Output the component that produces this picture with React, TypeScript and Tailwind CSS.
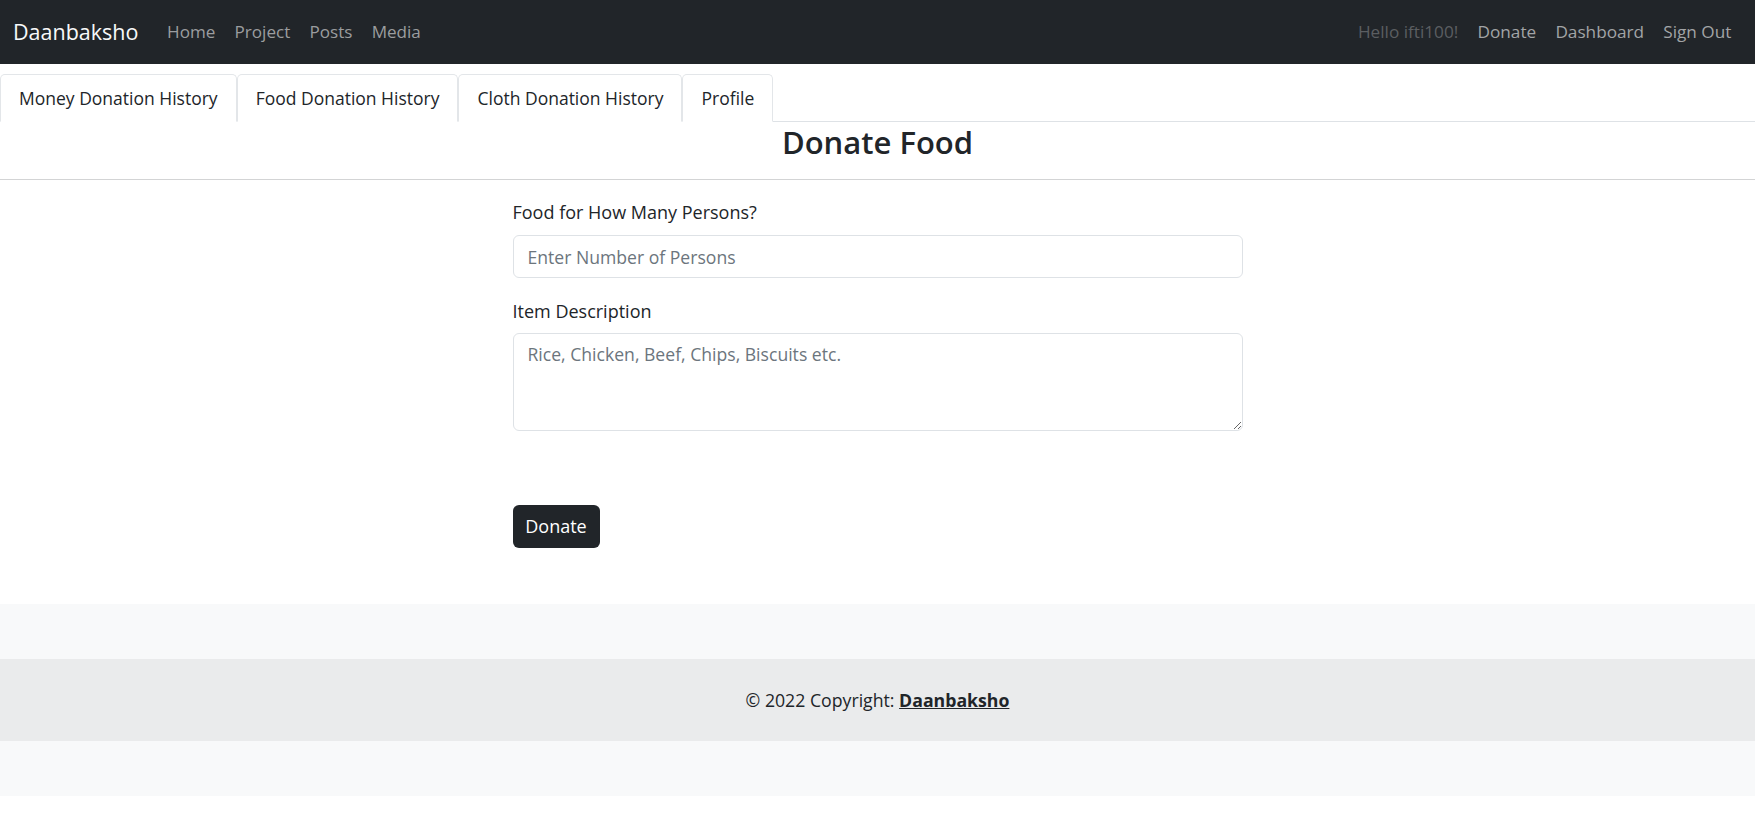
import React from "react";

const leftLinks = ["Home", "Project", "Posts", "Media"];
const rightLinks = ["Donate", "Dashboard", "Sign Out"];
const tabs = [
  "Money Donation History",
  "Food Donation History",
  "Cloth Donation History",
  "Profile",
];

function Navbar() {
  return (
    <nav className="flex h-[64px] items-center justify-between bg-[#212529] pl-[13px] pr-[14px]">
      <div className="flex items-center">
        <a className="mr-[19px] text-[21.5px] leading-[32px] text-[#f8f9fa]">
          Daanbaksho
        </a>
        {leftLinks.map((l) => (
          <a key={l} className="px-[9.6px] text-[17.1px] leading-[28px] text-[#9b9d9f]">
            {l}
          </a>
        ))}
      </div>
      <div className="flex items-center">
        <span className="px-[9.6px] text-[17.2px] leading-[28px] text-[#5b5e61]">
          Hello ifti100!
        </span>
        {rightLinks.map((l) => (
          <a key={l} className="px-[9.6px] text-[17.2px] leading-[28px] text-[#a2a4a6]">
            {l}
          </a>
        ))}
      </div>
    </nav>
  );
}

function Tabs() {
  return (
    <ul className="mt-[10px] flex border-b border-[#dee2e6]">
      {tabs.map((t) => (
        <li
          key={t}
          className="-mb-px rounded-t-[5px] border border-[#e3e6e9] border-b-white bg-white px-[18px] py-[9px] text-[17.5px] leading-[28px] text-[#212529]"
        >
          {t}
        </li>
      ))}
    </ul>
  );
}

function DonateForm() {
  return (
    <form className="mx-auto w-[730px] pt-[18px]">
      <label className="mb-[8px] block text-[18px] leading-[29px] text-[#212529]">
        Food for How Many Persons?
      </label>
      <input
        type="number"
        placeholder="Enter Number of Persons"
        className="block h-[43px] w-full rounded-[6px] border border-[#dee2e6] px-[14px] text-[17.6px] text-[#212529] outline-none placeholder:text-[#6c757d]"
      />
      <label className="mb-[7px] mt-[19px] block text-[18px] leading-[29px] text-[#212529]">
        Item Description
      </label>
      <textarea
        rows={3}
        placeholder="Rice, Chicken, Beef, Chips, Biscuits etc."
        className="block h-[98px] w-full rounded-[6px] border border-[#dee2e6] px-[14px] py-[6px] text-[17.6px] leading-[28px] text-[#212529] outline-none placeholder:text-[#6c757d]"
      />
      <button
        type="button"
        className="mt-[74px] h-[43px] w-[87px] rounded-[6px] bg-[#212529] text-[18px] text-white"
      >
        Donate
      </button>
    </form>
  );
}

function Footer() {
  return (
    <footer className="mt-[56px] bg-[#f8f9fa] py-[55px]">
      <div className="flex h-[82px] items-center justify-center bg-[#eaebec] text-[17.7px] text-[#212529]">
        <span>
          © 2022 Copyright:{" "}
          <a className="font-bold underline">Daanbaksho</a>
        </span>
      </div>
    </footer>
  );
}

export default function App() {
  return (
    <div className="bg-white font-['Open_Sans',sans-serif]">
      <Navbar />
      <Tabs />
      <h3 className="text-center text-[31px] font-semibold leading-[40px] text-[#212529]">
        Donate Food
      </h3>
      <hr className="mt-[17px] border-t border-[#d3d4d5]" />
      <DonateForm />
      <Footer />
    </div>
  );
}
